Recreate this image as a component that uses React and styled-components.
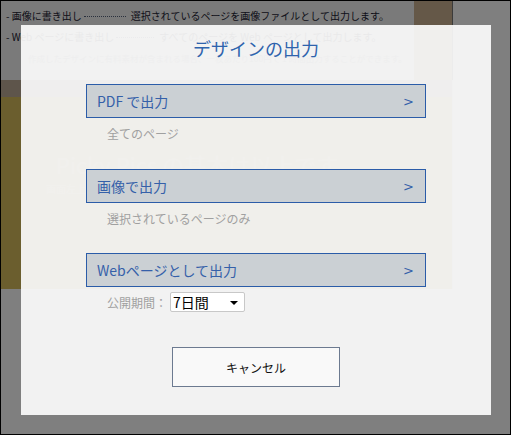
import React from "react";
import styled, { createGlobalStyle } from "styled-components";

const Global = createGlobalStyle`
  html, body { margin: 0; padding: 0; background: #fff; }
  body { font-family: "Noto Sans CJK JP", "Noto Sans", sans-serif; }
  * { box-sizing: border-box; }
`;

const Frame = styled.div`
  position: relative;
  width: 511px;
  height: 435px;
  border: 1px solid #000;
  overflow: hidden;
  display: flex;
  background: #fff;
`;

const PageColumn = styled.div`
  width: 452px;
  display: flex;
  flex-direction: column;
`;

const Header = styled.div`
  height: 79px;
  display: flex;
  background: #f4f4f4;
  border-right: 1px solid #777;
`;

const HeaderText = styled.div`
  flex: 1;
  padding: 8px 0 0 5px;
  color: #1c2233;
  font-size: 10px;
  display: flex;
  flex-direction: column;
`;

const HeadLine = styled.div`
  line-height: 14px;
  white-space: nowrap;
  display: flex;
  align-items: center;
  align-self: flex-start;
  height: 14px;
  margin-bottom: 7px;
`;

const Note = styled.div`
  font-size: 8.5px;
  padding-left: 22px;
  line-height: 14px;
  white-space: nowrap;
  color: #9a9ca4;
`;

const Leader = styled.span`
  display: inline-block;
  width: ${(p) => p.w}px;
  margin: 0 5px 0 2px;
  border-bottom: 1px dotted #55607a;
  height: 1px;
`;

const BrownBlock = styled.div`
  width: 38px;
  background: #cab090;
`;

const Strip = styled.div`
  height: 17px;
  background: #bcab97;
  border-right: 1px solid #e8e8e8;
`;

const Band = styled.div`
  height: 192px;
  background: #d6bc5c;
  padding: 52px 0 0 45px;
  color: #e6d48e;
  border-right: 1px solid #e8e8e8;
`;

const BandTitle = styled.div`
  font-size: 22px;
  line-height: 30px;
  padding-left: 10px;
  white-space: nowrap;
`;

const BandNote = styled.div`
  font-size: 10px;
  line-height: 16px;
  margin-top: 2px;
  white-space: nowrap;
`;

const RightArea = styled.div`
  flex: 1;
  background: #fff;
`;

const Overlay = styled.div`
  position: absolute;
  inset: 0;
  background: rgba(0, 0, 0, 0.5);
  padding: 24px 0 0 20px;
`;

const Modal = styled.div`
  width: 470px;
  height: 390px;
  background: rgba(252, 252, 252, 0.92);
  display: flex;
  flex-direction: column;
  align-items: center;
  padding-top: 10px;
`;

const Title = styled.h2`
  margin: 0 0 23px;
  font-size: 18px;
  line-height: 26px;
  font-weight: 400;
  color: #2e63ad;
`;

const Options = styled.div`
  width: 340px;
  display: flex;
  flex-direction: column;
`;

const Option = styled.div`
  display: flex;
  flex-direction: column;
  margin-bottom: ${(p) => p.gap}px;
`;

const OptionButton = styled.div`
  height: 34px;
  border: 1px solid #2b5ca8;
  background: #cbd0d4;
  color: #3560a9;
  font-size: 14px;
  display: flex;
  align-items: center;
  justify-content: space-between;
  padding: 0 11px 0 10px;
`;

const Arrow = styled.span`
  font-size: 13px;
  font-family: "DejaVu Sans", sans-serif;
`;

const Desc = styled.div`
  height: 30px;
  display: flex;
  align-items: center;
  padding-left: 21px;
  font-size: 12px;
  color: #a0a0a0;
  gap: 3px;
`;

const Select = styled.div`
  width: 75px;
  height: 20px;
  background: #fff;
  border: 1px solid #c8c8c8;
  border-radius: 2px;
  display: flex;
  align-items: center;
  justify-content: space-between;
  padding: 0 6px 0 2px;
  color: #000;
  font-size: 14px;
`;

const Caret = styled.span`
  width: 0;
  height: 0;
  border-left: 4px solid transparent;
  border-right: 4px solid transparent;
  border-top: 4px solid #000;
  margin-top: 2px;
`;

const CancelButton = styled.div`
  margin-top: 30px;
  width: 168px;
  height: 40px;
  border: 1px solid #6c7a90;
  background: #f9f9f9;
  color: #111;
  font-size: 12px;
  display: flex;
  align-items: center;
  justify-content: center;
`;

export default function App() {
  return (
    <>
      <Global />
      <Frame>
        <PageColumn>
          <Header>
            <HeaderText>
              <HeadLine>
                - 画像に書き出し<Leader w={42} />選択されているページを画像ファイルとして出力します。
              </HeadLine>
              <HeadLine>
                - Web ページに書き出し<Leader w={38} />すべてのページを Web ページとして出力します。
              </HeadLine>
              <Note>作成したデザインに有料素材が含まれる場合、一枚あたり100円で 1 時間出力することができます。</Note>
            </HeaderText>
            <BrownBlock />
          </Header>
          <Strip />
          <Band>
            <BandTitle>Picky Pics の基本は以上です</BandTitle>
            <BandNote>画面左上のロゴをクリックして、さっそくデザインを始めましょう</BandNote>
          </Band>
        </PageColumn>
        <RightArea />
        <Overlay>
          <Modal>
            <Title>デザインの出力</Title>
            <Options>
              <Option gap={21}>
                <OptionButton>
                  <span>PDF で出力</span>
                  <Arrow>&gt;</Arrow>
                </OptionButton>
                <Desc>全てのページ</Desc>
              </Option>
              <Option gap={20}>
                <OptionButton>
                  <span>画像で出力</span>
                  <Arrow>&gt;</Arrow>
                </OptionButton>
                <Desc>選択されているページのみ</Desc>
              </Option>
              <Option gap={0}>
                <OptionButton>
                  <span>Webページとして出力</span>
                  <Arrow>&gt;</Arrow>
                </OptionButton>
                <Desc>
                  公開期間：
                  <Select>
                    <span>7日間</span>
                    <Caret />
                  </Select>
                </Desc>
              </Option>
            </Options>
            <CancelButton>キャンセル</CancelButton>
          </Modal>
        </Overlay>
      </Frame>
    </>
  );
}
